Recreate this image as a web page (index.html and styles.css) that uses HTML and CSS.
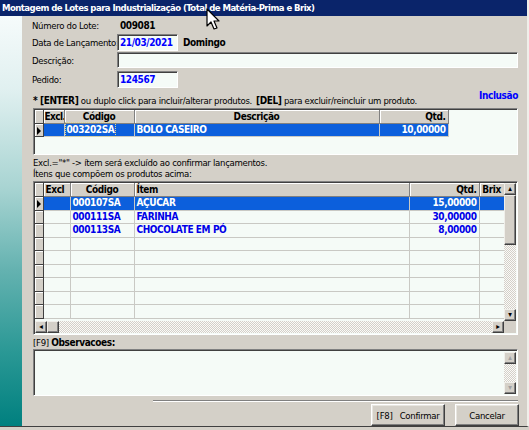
FILE: index.html
```html
<!DOCTYPE html>
<html lang="pt">
<head>
  <meta charset="UTF-8" />
  <title>Montagem de Lotes</title>
  <link rel="stylesheet" href="styles.css">
</head>
<body>
  <div class="window">
    <div class="titlebar">Montagem de Lotes para Industrialização (Total de Matéria-Prima e Brix)</div>

    <div class="frame">
      <div class="strip"></div>

      <div class="content">
        <!-- Header fields -->
        <div class="row r1">
          <span class="label">Número do Lote:</span>
          <span class="value">009081</span>
        </div>
        <div class="row r2">
          <span class="label">Data de Lançamento:</span>
          <div class="input short">21/03/2021</div>
          <span class="value day">Domingo</span>
        </div>
        <div class="row r3">
          <span class="label">Descrição:</span>
          <div class="input long"></div>
        </div>
        <div class="row r4">
          <span class="label">Pedido:</span>
          <div class="input short">124567</div>
        </div>

        <div class="hint">
          <span class="hint-a"><b>* [ENTER]</b> ou duplo click para incluir/alterar produtos.</span>
          <span class="hint-b"><b>[DEL]</b> para excluir/reincluir um produto.</span>
          <span class="mode">Inclusão</span>
        </div>

        <!-- Products grid -->
        <div class="grid grid-top">
          <table class="cells">
            <colgroup>
              <col style="width:8px"><col style="width:21px"><col style="width:70px">
              <col style="width:245px"><col style="width:69px"><col>
            </colgroup>
            <tr class="head">
              <th class="ind"></th><th class="tight">Excl.</th><th>Código</th><th>Descrição</th><th>Qtd.</th><th class="blank"></th>
            </tr>
            <tr class="sel">
              <td class="ind cur"></td><td></td><td><span class="focus">003202SA</span></td><td>BOLO CASEIRO</td><td class="num">10,00000</td><td class="blank"></td>
            </tr>
          </table>
        </div>

        <p class="note first">Excl.="*" -&gt; ítem será excluído ao confirmar lançamentos.</p>
        <p class="note">Ítens que compõem os produtos acima:</p>

        <!-- Items grid -->
        <div class="grid grid-items">
          <div class="grid-area">
            <table class="cells">
              <colgroup>
                <col style="width:8px"><col style="width:27px"><col style="width:64px">
                <col style="width:275px"><col style="width:70px"><col style="width:25px">
              </colgroup>
              <tr class="head">
                <th class="ind"></th><th>Excl</th><th>Código</th><th>Ítem</th><th>Qtd.</th><th>Brix</th>
              </tr>
              <tr class="sel">
                <td class="ind cur"></td><td></td><td>000107SA</td><td>AÇUCAR</td><td class="num">15,00000</td><td></td>
              </tr>
              <tr>
                <td class="ind"></td><td></td><td>000111SA</td><td>FARINHA</td><td class="num">30,00000</td><td></td>
              </tr>
              <tr>
                <td class="ind"></td><td></td><td>000113SA</td><td>CHOCOLATE EM PÓ</td><td class="num">8,00000</td><td></td>
              </tr>
              <tr><td class="ind"></td><td></td><td></td><td></td><td></td><td></td></tr>
              <tr><td class="ind"></td><td></td><td></td><td></td><td></td><td></td></tr>
              <tr><td class="ind"></td><td></td><td></td><td></td><td></td><td></td></tr>
              <tr><td class="ind"></td><td></td><td></td><td></td><td></td><td></td></tr>
              <tr><td class="ind"></td><td></td><td></td><td></td><td></td><td></td></tr>
              <tr><td class="ind"></td><td></td><td></td><td></td><td></td><td></td></tr>
            </table>
          </div>
          <div class="vscroll">
            <div class="sbtn">&#9652;</div>
            <div class="thumb v"></div>
            <div class="track"></div>
            <div class="sbtn">&#9662;</div>
          </div>
          <div class="hscroll">
            <div class="sbtn">&#9666;</div>
            <div class="thumb h"></div>
            <div class="track"></div>
            <div class="sbtn">&#9656;</div>
          </div>
          <div class="corner"></div>
        </div>

        <p class="obs-label">[F9] <b>Observacoes:</b></p>
        <div class="memo">
          <div class="memo-text"></div>
          <div class="vscroll off">
            <div class="sbtn">&#9652;</div>
            <div class="track"></div>
            <div class="sbtn">&#9662;</div>
          </div>
        </div>

        <div class="separator"></div>

        <div class="buttons">
          <button class="btn confirm">[F8]&nbsp;&nbsp; Confirmar</button>
          <button class="btn cancel">Cancelar</button>
        </div>
      </div>
    </div>
  </div>

  <!-- mouse pointer caught in the screenshot -->
  <svg class="pointer" width="16" height="24" viewBox="0 0 16 24">
    <path d="M1 1 L1 18 L5 14 L8 21 L11 20 L8 13 L13 13 Z" fill="#fff" stroke="#000" stroke-width="1.2" stroke-linejoin="round"/>
  </svg>
</body>
</html>
```

FILE: styles.css
```css
body {
  margin: 0;
  background: #d4d0c8;
  font-family: "DejaVu Sans Condensed", "Liberation Sans", sans-serif;
  font-size: 9.5px;
  letter-spacing: -0.3px;
  color: #000;
}

b {
  font-size: 10px;
  letter-spacing: -0.4px;
}

.window {
  width: 527px;
  height: 426px;
  border-right: 2px solid #f0efea;
  border-bottom: 1px solid #404040;
  position: relative;
}

.titlebar {
  height: 16px;
  line-height: 16px;
  padding-left: 2px;
  background: #0a246a;
  color: #fff;
  font-weight: bold;
  font-size: 9.5px;
  letter-spacing: -0.55px;
  white-space: nowrap;
  overflow: hidden;
}

.frame {
  display: flex;
  height: 410px;
}

.strip {
  width: 22px;
  flex: none;
  background: linear-gradient(#f6fbfb 0%, #e0f0f0 18%, #a8d4d2 42%, #64b2b0 62%, #2a9895 82%, #00807f 100%);
}

.content {
  flex: 1;
  padding: 0 9px 0 11px;
  display: flex;
  flex-direction: column;
}

/* fields */
.row {
  display: flex;
  align-items: center;
  white-space: nowrap;
}
.r1 { margin-top: 3px; height: 13px; }
.r2 { margin-top: 2px; height: 17px; }
.r3 { margin-top: 1px; height: 16px; }
.r4 { margin-top: 3px; height: 17px; }

.label {
  width: 85px;
  margin-left: -1px;
  flex: none;
}

.value {
  font-weight: bold;
  font-size: 10px;
  letter-spacing: -0.4px;
  margin-left: 3px;
}
.value.day { margin-left: 5px; }

.input {
  box-sizing: border-box;
  height: 100%;
  background: #f5fbf7;
  border: 1px solid;
  border-color: #808080 #ffffff #ffffff #808080;
  box-shadow: inset 1px 1px #404040;
  color: #0000ff;
  font-weight: bold;
  font-size: 10px;
  letter-spacing: -0.4px;
  padding: 1px 2px 0;
  line-height: 14px;
}
.input.short { width: 61px; }
.input.long { flex: 1; height: 16px; }

.hint {
  margin-top: 4px;
  height: 14px;
  display: flex;
  align-items: flex-end;
  white-space: nowrap;
}
.hint-a { width: 223px; }
.hint-b { flex: 1; }
.mode {
  align-self: flex-start;
  margin-top: -2px;
  color: #0000ff;
  font-weight: bold;
  font-size: 10px;
  letter-spacing: -0.4px;
}

/* grids */
.grid {
  box-sizing: border-box;
  background: #f5fbf7;
  border: 1px solid;
  border-color: #808080 #ffffff #ffffff #808080;
  box-shadow: inset 1px 1px #404040;
  padding: 1px 1px 0 1px;
}

.grid-top {
  margin-top: 2px;
  height: 47px;
}

.cells {
  border-collapse: collapse;
  table-layout: fixed;
  width: 100%;
}

.cells th,
.cells td {
  height: 13px;
  padding: 0 2px;
  border-right: 1px solid #c9c9c4;
  border-bottom: 1px solid #c9c9c4;
  white-space: nowrap;
  line-height: 12px;
  font-weight: bold;
  font-size: 10px;
  letter-spacing: -0.4px;
  color: #0000e8;
  box-sizing: border-box;
}

.cells th {
  overflow: hidden;
  line-height: 13px;
  background: #d4d0c8;
  color: #000;
  border-right: 1px solid #808080;
  border-bottom: 1px solid #808080;
  box-shadow: inset 1px 1px #fff;
}
.cells th:nth-child(2) { text-align: left; }
.cells th:nth-child(3) { text-align: center; }
.cells th:nth-child(4) { text-align: left; }
.grid-top .cells th:nth-child(4) { text-align: center; }
.cells th:nth-child(5) { text-align: right; }
.cells th.tight { padding: 0 0 0 1px; letter-spacing: -0.6px; }

.cells .blank {
  background: #f5fbf7;
  border: none;
  box-shadow: none;
}

.cells .ind {
  padding: 0;
  background: #d4d0c8;
  border-right: 1px solid #404040;
  border-bottom: 1px solid #404040;
  box-shadow: inset 1px 1px #fff;
  position: relative;
}
.cells .cur::after {
  content: "";
  position: absolute;
  left: 2px;
  top: 3px;
  border-left: 4px solid #000;
  border-top: 4px solid transparent;
  border-bottom: 4px solid transparent;
}

.cells .num { text-align: right; }

.cells tr.sel td {
  background: #0c5fdc;
  color: #fff;
}
.cells tr.sel td.ind { background: #d4d0c8; }
.cells tr.sel td.blank { background: #f5fbf7; }

.grid-items .cells td { height: 13.5px; }

.focus {
  outline: 1px dotted #e0d890;
  outline-offset: 1px;
}

.note {
  margin: 0;
  height: 11px;
  line-height: 11px;
  white-space: nowrap;
}
.note.first { margin-top: 2px; }

.grid-items {
  margin-top: 2px;
  height: 154px;
  display: grid;
  grid-template-columns: 1fr 12px;
  grid-template-rows: 1fr 12px;
  padding: 1px;
}

.grid-area { overflow: hidden; }

.vscroll,
.hscroll {
  display: flex;
  background: repeating-conic-gradient(#d4d0c8 0 25%, #fafaf8 0 50%) 0 0 / 2px 2px;
}
.vscroll { flex-direction: column; }

.track { flex: 1; }

.sbtn,
.thumb {
  box-sizing: border-box;
  width: 12px;
  height: 12px;
  flex: none;
  background: #d4d0c8;
  border: 1px solid;
  border-color: #f0efea #404040 #404040 #f0efea;
  box-shadow: inset -1px -1px #808080;
  font-size: 8px;
  letter-spacing: 0;
  line-height: 10px;
  text-align: center;
  color: #000;
}
.thumb.v { height: 50px; }
.off .sbtn { color: #a0a0a0; }

.corner { background: #d4d0c8; }

.obs-label {
  margin: 2px 0 0;
  height: 11px;
  line-height: 11px;
}

.memo {
  margin-top: 1px;
  height: 47px;
  box-sizing: border-box;
  display: flex;
  background: #f5fbf7;
  border: 1px solid;
  border-color: #808080 #ffffff #ffffff #808080;
  box-shadow: inset 1px 1px #404040;
  padding: 2px 1px 1px 2px;
}
.memo-text { flex: 1; }

.separator {
  margin: 4px 0 0 120px;
  height: 0;
  border-top: 1px solid #808080;
  border-bottom: 1px solid #fff;
}

.buttons {
  margin-top: 2px;
  display: flex;
  justify-content: flex-end;
  gap: 10px;
  margin-right: -1px;
}

.btn {
  height: 22px;
  font-family: inherit;
  font-size: 9.5px;
  letter-spacing: -0.3px;
  background: #d4d0c8;
  border: 1px solid;
  border-color: #fff #404040 #404040 #fff;
  box-shadow: inset -1px -1px #808080, inset 1px 1px #e8e6e0;
  padding: 0;
  color: #000;
}
.btn.confirm { width: 74px; }
.btn.cancel { width: 64px; }

.pointer {
  position: absolute;
  left: 206px;
  top: 8px;
}
```
